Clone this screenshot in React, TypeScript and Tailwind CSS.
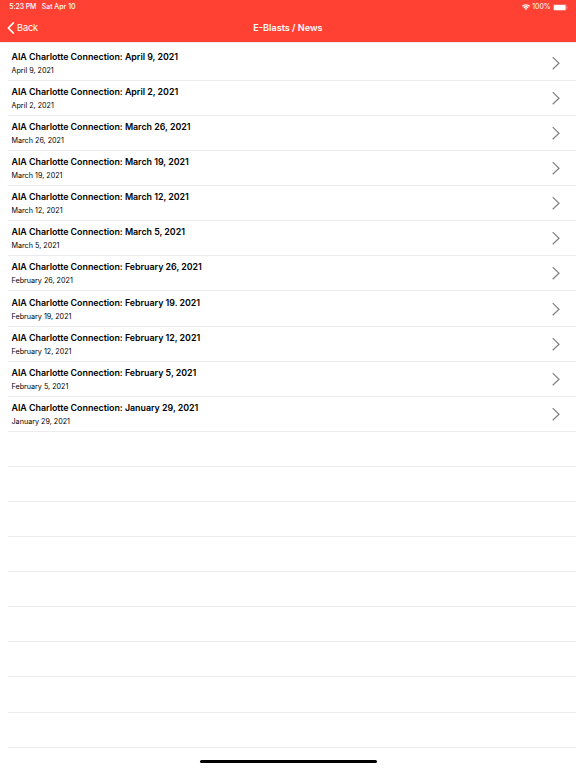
import React from "react";

const blasts = [
  { title: "AIA Charlotte Connection: April 9, 2021", date: "April 9, 2021" },
  { title: "AIA Charlotte Connection: April 2, 2021", date: "April 2, 2021" },
  { title: "AIA Charlotte Connection: March 26, 2021", date: "March 26, 2021" },
  { title: "AIA Charlotte Connection: March 19, 2021", date: "March 19, 2021" },
  { title: "AIA Charlotte Connection: March 12, 2021", date: "March 12, 2021" },
  { title: "AIA Charlotte Connection: March 5, 2021", date: "March 5, 2021" },
  { title: "AIA Charlotte Connection: February 26, 2021", date: "February 26, 2021" },
  { title: "AIA Charlotte Connection: February 19. 2021", date: "February 19, 2021" },
  { title: "AIA Charlotte Connection: February 12, 2021", date: "February 12, 2021" },
  { title: "AIA Charlotte Connection: February 5, 2021", date: "February 5, 2021" },
  { title: "AIA Charlotte Connection: January 29, 2021", date: "January 29, 2021" },
];

function WifiIcon() {
  return (
    <svg width="8" height="6" viewBox="0 0 16 12" fill="none" stroke="white" strokeWidth="2.5">
      <path d="M.8 4.6a10.2 10.2 0 0 1 14.4 0" />
      <path d="M3.6 7.6a6.3 6.3 0 0 1 8.8 0" />
      <path d="M8 12 5.4 9.4a3.7 3.7 0 0 1 5.2 0z" fill="white" stroke="none" />
    </svg>
  );
}

function BatteryIcon() {
  return (
    <svg width="15" height="7" viewBox="0 0 15 7">
      <rect x="0.25" y="0.25" width="13" height="6.4" rx="1.7" fill="none" stroke="white" strokeOpacity="0.6" strokeWidth="0.5" />
      <rect x="0.9" y="0.9" width="11.7" height="5.1" rx="1.1" fill="white" />
      <path d="M13.9 2.4c.7.3.7 1.8 0 2.1z" fill="white" fillOpacity="0.6" />
    </svg>
  );
}

export default function App() {
  return (
    <div className="relative h-[768px] overflow-hidden bg-white font-['Inter',sans-serif] text-black">
      <header className="h-[42px] bg-[#ff4133] text-white">
        {/* Status bar */}
        <div className="flex h-[14px] items-center justify-between pl-[9.3px] pr-[8.5px] text-[6.9px] leading-[14px] font-medium">
          <div className="flex gap-[5.5px]">
            <span className="tracking-[-0.08px]">5:23 PM</span>
            <span className="tracking-[0.03px]">Sat Apr 10</span>
          </div>
          <div className="flex items-center">
            <WifiIcon />
            <span className="ml-[2px] mr-[2px] font-normal">100%</span>
            <BatteryIcon />
          </div>
        </div>
        {/* Navigation bar */}
        <div className="grid h-[28px] grid-cols-3 items-center px-[7px]">
          <div className="flex items-center gap-[2px]">
            <svg width="8" height="12" viewBox="0 0 8 12" fill="none" stroke="white" strokeWidth="1.7">
              <path d="M6.8.5 1.4 6l5.4 5.5" />
            </svg>
            <span className="text-[9.2px] leading-[12px] tracking-[-0.12px]">Back</span>
          </div>
          <div className="text-center text-[9.1px] leading-[12px] font-semibold">E-Blasts / News</div>
        </div>
      </header>

      <main className="border-t border-[#ececec] pt-[2.8px]">
        {blasts.map((b) => (
          <div key={b.title} className="ml-[8px] flex h-[35.1px] items-center justify-between border-b border-[#ebebeb] pl-[3.5px] pr-[16px]">
            <div className="pt-[2px]">
              <div className="text-[8.9px] leading-[14px] font-semibold tracking-[-0.025px]">{b.title}</div>
              <div className="text-[7.2px] leading-[14px]">{b.date}</div>
            </div>
            <svg width="8" height="14" viewBox="0 0 8 14" fill="none" stroke="#808084" strokeWidth="1.2">
              <path d="M.7 1.1 7 7.2.7 13.3" />
            </svg>
          </div>
        ))}
        {[...Array(9)].map((_, i) => (
          <div key={i} className="ml-[8px] h-[35.1px] border-b border-[#ebebeb]" />
        ))}
      </main>

      {/* Home indicator */}
      <div className="absolute bottom-[4.7px] left-[199.5px] h-[3px] w-[177px] rounded-full bg-black" />
    </div>
  );
}
